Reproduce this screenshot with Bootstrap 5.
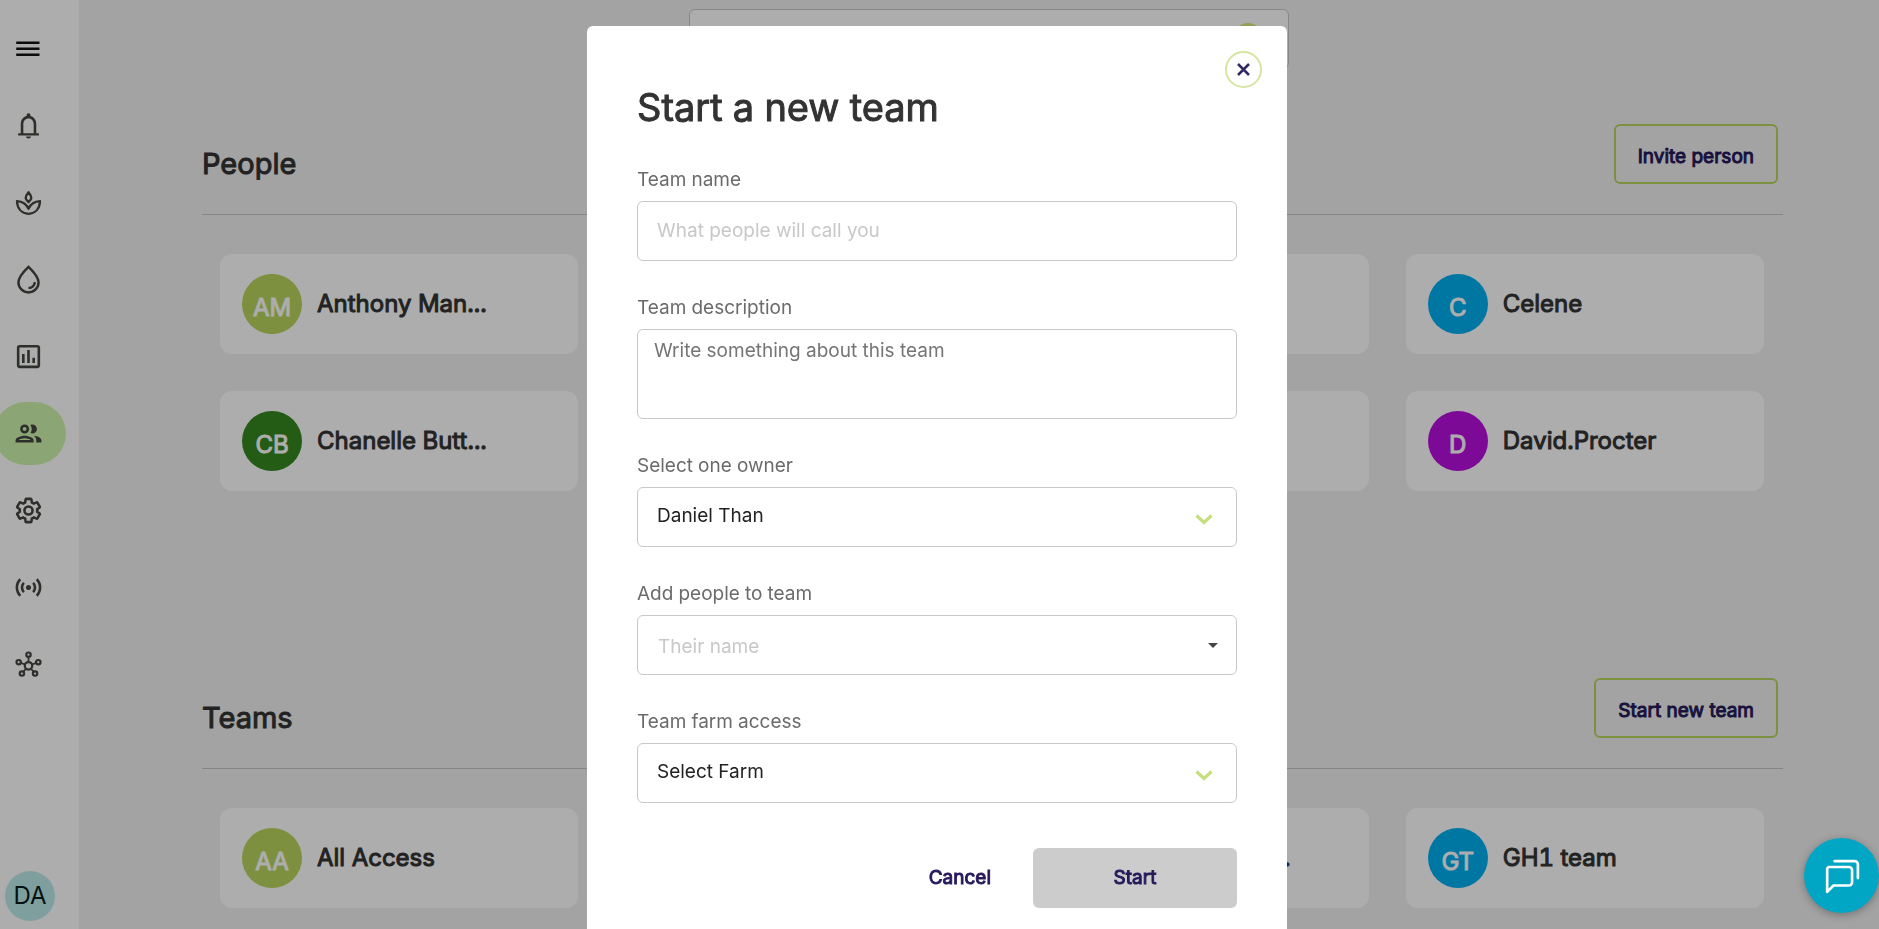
<!DOCTYPE html>
<html lang="en">
<head>
<meta charset="utf-8">
<meta name="viewport" content="width=device-width, initial-scale=1">
<title>People and teams</title>
<link href="https://cdn.jsdelivr.net/npm/bootstrap@5.3.0/dist/css/bootstrap.min.css" rel="stylesheet">
<style>
  :root { --ink: #333; --navy: #261a5b; --lime: #b8d55e; --line: #c8c8c8; }
  body { font-family: Inter, "Liberation Sans", sans-serif; background: #f0f0f0; color: var(--ink); font-size: 19px; line-height: 24px; font-variant-numeric: tabular-nums; }
  .heavy { font-weight: 400; -webkit-text-stroke: 1px currentColor; }

  .side { width: 79px; background: #fff; padding: 17px 0 8px; }
  .side a { display: flex; align-items: center; width: 66px; height: 63px; padding-left: 13px; margin-bottom: 14px; color: #43463f; border-radius: 0 32px 32px 0; }
  .side a:first-child { color: #111; }
  .side a.current { background: #cef4ab; border-radius: 32px; margin-left: -6px; width: 72px; padding-left: 19px; }
  .side svg { width: 31px; height: 31px; fill: currentColor; }
  .side svg .ln { fill: none; stroke: currentColor; }
  .me { width: 50px; height: 50px; margin-left: 5px; background: #bcebeb; color: #0a1a1a; font-size: 24px; }

  .topbar { padding: 9px 0 0 20px; }
  .finder { width: 600px; height: 60px; background: #fff; border: 1px solid var(--line); border-radius: 6px; padding-right: 24px; }
  .finder-dot { width: 32px; height: 32px; background: #d4f07c; }
  .content { padding: 55px 96px 0 123px; }
  .people { min-height: 554px; }
  .head { border-bottom: 1px solid #c4c4c4; padding: 0 5px 30px 0; }
  .head h2 { font-size: 29px; line-height: 36px; margin: 0 0 2px; }
  .btn-line { height: 60px; padding: 6px 22px 0; border: 2px solid var(--lime); border-radius: 6px; color: var(--navy); font-size: 19px; }
  .tiles { display: grid; grid-template-columns: repeat(4, 1fr); gap: 37px; padding: 39px 19px 0 18px; }
  .tile { height: 100px; background: #fff; border-radius: 12px; padding: 0 22px; gap: 15px; font-size: 24px; }
  .face { flex: none; width: 60px; height: 60px; padding-top: 8px; color: #fff; }
  .more { width: 183px; color: #0b3f94; }

  .shade { background: #000; opacity: .32; z-index: 1050; }
  .modal { scrollbar-width: none; padding-right: 5px; }
  .modal-dialog { max-width: 700px; margin-top: 26px; }
  .modal-content { border: 0; border-radius: 6px; padding: 57px 50px 50px; color: var(--ink); }
  .modal-content h1 { font-size: 38px; line-height: 48px; margin: 0 0 37px; }
  .close-x { position: absolute; top: 25px; right: 25px; width: 37px; height: 37px; border: 2px solid #d6e5a0; background: #fff; }
  .form-label { display: block; color: #6b6b6b; margin-bottom: 9px; }
  .field { height: 60px; margin-bottom: 35px; padding: 0 19px 2px; border: 1px solid var(--line); border-radius: 6px; font-size: 19px; line-height: 24px; color: #222; }
  .field::placeholder { color: #c8c8c8; opacity: 1; }
  textarea.field { height: 90px; padding: 9px 16px; resize: none; }
  textarea.field::placeholder { color: #757575; }
  select.field { background-position: right 23px top 26px; background-size: 18px 11px;
    background-image: url("data:image/svg+xml,%3Csvg xmlns='http://www.w3.org/2000/svg' viewBox='0 0 18 11'%3E%3Cpath d='M1.500 1.500l7.500 7 7.500-7' fill='none' stroke='%23c5de7e' stroke-width='3.300'/%3E%3C/svg%3E"); }
  input.picker { padding: 2px 20px 0; background: #fff url("data:image/svg+xml,%3Csvg xmlns='http://www.w3.org/2000/svg' viewBox='0 0 10 5'%3E%3Cpath d='M0 0h10L5 5z' fill='%23444'/%3E%3C/svg%3E") no-repeat right 18px center / 10px 5px; }
  .actions { gap: 18px; margin-top: 10px; }
  .actions .btn { height: 60px; font-size: 19px; color: var(--navy); border: 0; border-radius: 6px; padding: 0 24px; }
  .actions .btn-go { width: 204px; background: #ccc; opacity: 1; }
  .chat { right: 0; bottom: 16px; width: 75px; height: 75px; background: #00a6c3; z-index: 1060; box-shadow: 0 2px 8px rgba(0,0,0,.3); }
</style>
</head>
<body class="modal-open overflow-hidden">

<div class="d-flex vh-100 overflow-hidden">
  <nav class="side d-flex flex-column flex-shrink-0" aria-label="Main">
    <a href="#" aria-label="Menu"><svg viewBox="0 0 24 24"><path d="M2.500 17.900h18v-2h-18zm0-4.700h18v-2h-18zm0-6.700v2h18v-2z"/></svg></a>
    <a href="#" aria-label="Notifications"><svg viewBox="0 0 24 24"><path d="M12 22c1.100 0 2-.7 2-1.500h-4c0 .8.900 1.500 2 1.500zm6-4v-7c0-3.070-1.630-5.640-4.500-6.320V4a1.500 1.500 0 0 0-3 0v.68C7.640 5.360 6 7.920 6 11v7H4v1.700h16V18zm-2 0H8v-7c0-2.480 1.510-4.500 4-4.500s4 2.020 4 4.500z"/></svg></a>
    <a href="#" aria-label="Crops"><svg viewBox="0 0 24 24"><path class="ln" stroke-width="1.800" stroke-linejoin="round" d="M3.100 11C3.300 17 7 20.400 12 20.800c5-.4 8.700-3.800 8.900-9.800-4 .2-7.200 2.200-8.900 5.800C10.300 13.200 7.100 11.200 3.100 11zM12 4c1.500 1.800 2.200 3.300 2.200 4.600 0 1.200-.9 2-2.200 3-1.300-1-2.200-1.800-2.200-3C9.800 7.300 10.500 5.800 12 4z"/></svg></a>
    <a href="#" aria-label="Irrigation"><svg viewBox="0 0 24 24"><path class="ln" stroke-width="1.900" d="M12 2.200C7 7 4.200 10.700 4.200 14.200a7.800 7.800 0 0 0 15.600 0C19.800 10.700 17 7 12 2.200z"/><path class="ln" stroke-width="1.900" d="M12 18.600c2.700 0 4.700-1.800 4.900-4.500"/></svg></a>
    <a href="#" aria-label="Reports"><svg viewBox="0 0 24 24"><path d="M9 17H7v-7h2zm4 0h-2V7h2zm4 0h-2v-4h2zm2 2H5V5h14zm0-16H5c-1.100 0-2 .9-2 2v14c0 1.100.9 2 2 2h14c1.100 0 2-.9 2-2V5c0-1.100-.9-2-2-2z"/></svg></a>
    <a href="#" class="current" aria-label="People"><svg viewBox="0 0 24 24"><path d="M9 13.750c-2.340 0-7 1.170-7 3.500V19h14v-1.750c0-2.330-4.660-3.500-7-3.500zM4.340 17c.84-.58 2.870-1.250 4.660-1.250s3.820.67 4.660 1.250zM9 12c1.930 0 3.500-1.570 3.500-3.500S10.930 5 9 5 5.500 6.570 5.500 8.500 7.070 12 9 12zm0-5c.83 0 1.500.67 1.500 1.500S9.830 10 9 10s-1.500-.67-1.500-1.500S8.170 7 9 7zm7.040 6.810c1.160.84 1.960 1.960 1.960 3.440V19h4v-1.750c0-2.020-3.500-3.170-5.960-3.440zM15 12c1.930 0 3.500-1.570 3.500-3.500S16.930 5 15 5c-.54 0-1.040.13-1.500.35.63.89 1 1.980 1 3.150s-.37 2.260-1 3.150c.46.22.96.35 1.500.35z"/></svg></a>
    <a href="#" aria-label="Settings"><svg viewBox="0 0 24 24"><g transform="translate(1.200 1.200) scale(.9)"><path class="ln" stroke-width="2.200" d="M19.430 12.980c.04-.32.07-.64.07-.98s-.03-.66-.07-.98l2.110-1.650c.19-.15.24-.42.12-.64l-2-3.460c-.12-.22-.39-.3-.61-.22l-2.490 1c-.52-.4-1.080-.73-1.690-.98l-.38-2.650C14.460 2.180 14.250 2 14 2h-4c-.25 0-.46.18-.49.42l-.38 2.650c-.61.25-1.170.59-1.690.98l-2.490-1c-.23-.09-.49 0-.61.22l-2 3.460c-.13.22-.07.49.12.64l2.110 1.650c-.04.32-.07.65-.07.98s.03.66.07.98l-2.110 1.650c-.19.15-.24.42-.12.64l2 3.460c.12.22.39.3.61.22l2.490-1c.52.4 1.080.73 1.690.98l.38 2.650c.03.24.24.42.49.42h4c.25 0 .46-.18.49-.42l.38-2.650c.61-.25 1.170-.59 1.690-.98l2.490 1c.23.09.49 0 .61-.22l2-3.460c.12-.22.07-.49-.12-.64z"/><circle class="ln" stroke-width="2.200" cx="12" cy="12" r="3.500"/></g></svg></a>
    <a href="#" aria-label="Sensors"><svg viewBox="0 0 24 24"><path d="M7.760 16.240C6.670 15.160 6 13.660 6 12s.67-3.160 1.760-4.240l1.420 1.420C8.450 9.900 8 10.900 8 12c0 1.100.45 2.100 1.170 2.830zm8.480 0C17.330 15.160 18 13.660 18 12s-.67-3.160-1.760-4.240l-1.420 1.420C15.550 9.900 16 10.900 16 12c0 1.100-.45 2.100-1.170 2.830zM12 10c-1.100 0-2 .9-2 2s.9 2 2 2 2-.9 2-2-.9-2-2-2zm8 2c0 2.210-.9 4.210-2.350 5.650l1.420 1.420C20.880 17.260 22 14.760 22 12s-1.120-5.260-2.930-7.070l-1.420 1.420C19.100 7.790 20 9.790 20 12zM6.350 6.350L4.930 4.930C3.120 6.740 2 9.240 2 12s1.120 5.260 2.930 7.070l1.420-1.420C4.900 16.210 4 14.210 4 12s.9-4.210 2.350-5.650z"/></svg></a>
    <a href="#" aria-label="Network"><svg viewBox="0 0 24 24"><g class="ln" stroke-width="1.700"><circle cx="12" cy="13" r="2.900"/><circle cx="12" cy="4.400" r="1.700"/><circle cx="4.400" cy="10.200" r="1.700"/><circle cx="19.600" cy="10.200" r="1.700"/><circle cx="6.900" cy="19" r="1.700"/><circle cx="17.100" cy="19" r="1.700"/><path stroke-width="1.400" d="M12 6v4M6 10.800l3.300 1.200M18 10.800L14.700 12M8 17.600l2.100-2.300M16 17.600l-2.100-2.300"/></g></svg></a>
    <div class="me rounded-circle d-flex align-items-center justify-content-center mt-auto">DA</div>
  </nav>

  <div class="flex-grow-1">
    <div class="topbar">
      <div class="finder d-flex align-items-center justify-content-end mx-auto"><span class="finder-dot rounded-circle"></span></div>
    </div>
    <main class="content">
      <section class="people">
        <div class="head d-flex align-items-end justify-content-between">
          <h2 class="heavy">People</h2>
          <button type="button" class="btn btn-line heavy">Invite person</button>
        </div>
        <div class="tiles">
          <div class="tile heavy d-flex align-items-center"><span class="face rounded-circle d-flex align-items-center justify-content-center" style="background:#b8d55e">AM</span><span>Anthony Man...</span></div>
          <div class="tile"></div>
          <div class="tile"></div>
          <div class="tile heavy d-flex align-items-center"><span class="face rounded-circle d-flex align-items-center justify-content-center" style="background:#00aff0">C</span><span>Celene</span></div>
          <div class="tile heavy d-flex align-items-center"><span class="face rounded-circle d-flex align-items-center justify-content-center" style="background:#358720">CB</span><span>Chanelle Butt...</span></div>
          <div class="tile"></div>
          <div class="tile"></div>
          <div class="tile heavy d-flex align-items-center"><span class="face rounded-circle d-flex align-items-center justify-content-center" style="background:#b80fdd">D</span><span>David.Procter</span></div>
        </div>
      </section>
      <section>
        <div class="head d-flex align-items-end justify-content-between">
          <h2 class="heavy">Teams</h2>
          <button type="button" class="btn btn-line heavy">Start new team</button>
        </div>
        <div class="tiles">
          <div class="tile heavy d-flex align-items-center"><span class="face rounded-circle d-flex align-items-center justify-content-center" style="background:#b8d55e">AA</span><span>All Access</span></div>
          <div class="tile"></div>
          <div class="tile heavy d-flex align-items-center"><span class="face"></span><span class="more text-end">...</span></div>
          <div class="tile heavy d-flex align-items-center"><span class="face rounded-circle d-flex align-items-center justify-content-center" style="background:#00aff0">GT</span><span>GH1 team</span></div>
        </div>
      </section>
    </main>
  </div>
</div>

<div class="shade position-fixed top-0 start-0 w-100 h-100"></div>

<div class="modal d-block" role="dialog" aria-modal="true" aria-labelledby="dlg-title">
  <div class="modal-dialog">
    <form class="modal-content">
      <button type="button" class="close-x rounded-circle d-flex align-items-center justify-content-center p-0" aria-label="Close">
        <svg width="13" height="13" viewBox="0 0 13 13"><path d="M1 1l11 11M12 1L1 12" stroke="#332766" stroke-width="2.500"/></svg>
      </button>
      <h1 id="dlg-title" class="heavy">Start a new team</h1>
      <label class="form-label" for="team-name">Team name</label>
      <input class="form-control field" id="team-name" type="text" placeholder="What people will call you">
      <label class="form-label" for="team-desc">Team description</label>
      <textarea class="form-control field" id="team-desc" placeholder="Write something about this team"></textarea>
      <label class="form-label" for="owner">Select one owner</label>
      <select class="form-select field" id="owner"><option>Daniel Than</option></select>
      <label class="form-label" for="members">Add people to team</label>
      <input class="form-control field picker" id="members" type="text" placeholder="Their name">
      <label class="form-label" for="farm">Team farm access</label>
      <select class="form-select field" id="farm"><option>Select Farm</option></select>
      <div class="actions d-flex justify-content-end">
        <button type="button" class="btn heavy">Cancel</button>
        <button type="submit" class="btn btn-go heavy" disabled>Start</button>
      </div>
    </form>
  </div>
</div>

<button type="button" class="chat position-fixed rounded-circle border-0 p-0 d-flex align-items-center justify-content-center" aria-label="Open chat">
  <svg width="36" height="36" viewBox="0 0 34 34" fill="none" stroke="#fff" stroke-width="2.500" stroke-linejoin="round" stroke-linecap="round"><path d="M5 8.500h18.500a3 3 0 0 1 3 3V23a3 3 0 0 1-3 3H9l-6 6V10.500a2 2 0 0 1 2-2z"/><path d="M10 3h19a3 3 0 0 1 3 3v13"/></svg>
</button>

<script src="https://cdn.jsdelivr.net/npm/bootstrap@5.3.0/dist/js/bootstrap.bundle.min.js"></script>
</body>
</html>
